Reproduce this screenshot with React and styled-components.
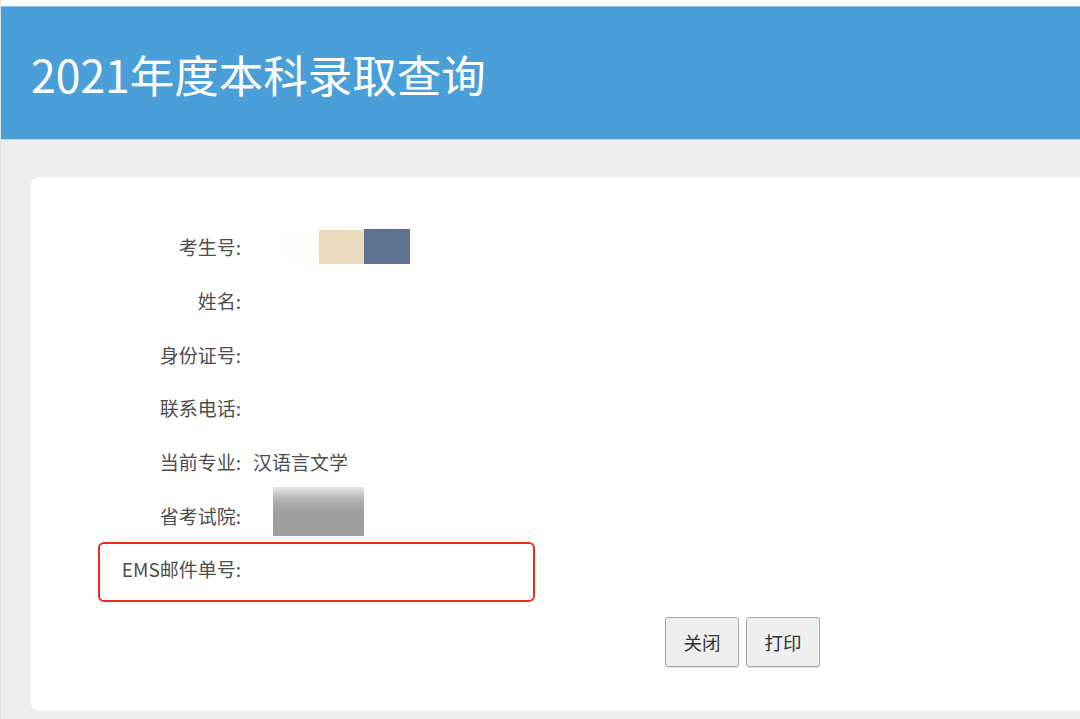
import React from "react";
import styled, { createGlobalStyle } from "styled-components";

const Global = createGlobalStyle`
  html, body { margin: 0; padding: 0; }
  body {
    background: #eeeeee;
    font-family: "Noto Sans CJK SC", "Noto Sans", "Liberation Sans", sans-serif;
  }
`;

const Page = styled.div`
  width: 1080px;
  height: 719px;
  overflow: hidden;
  display: flex;
  flex-direction: column;
  background: #eeeeee;
  border-left: 1px solid #e2e2e2;
  box-sizing: border-box;
`;

const TopStrip = styled.div`
  height: 6px;
  background: #ffffff;
  flex: none;
`;

const Header = styled.header`
  height: 134px;
  flex: none;
  background: #4a9fd9;
  border-top: 1px solid #8cc0e8;
  border-bottom: 1px solid #bcd8ef;
  box-sizing: border-box;
  display: flex;
  align-items: center;
  padding-left: 30px;
`;

const Title = styled.h1`
  margin: 0;
  margin-top: 3px;
  font-size: 44.5px;
  font-weight: 400;
  color: #ffffff;
  line-height: 1;
`;

const Main = styled.main`
  flex: 1;
  padding: 37px 0 8px 30px;
  display: flex;
`;

const Card = styled.section`
  flex: 1;
  position: relative;
  background: #ffffff;
  border-radius: 8px 0 0 8px;
  padding-top: 43px;
  box-sizing: border-box;
`;

const Rows = styled.div`
  display: flex;
  flex-direction: column;
`;

const Row = styled.div`
  height: 53.7px;
  display: flex;
  align-items: center;
`;

const Label = styled.div`
  width: 210px;
  flex: none;
  text-align: right;
  font-size: 19px;
  color: #4d4d4d;
  line-height: 1;
  white-space: nowrap;
`;

const Value = styled.div`
  margin-left: 12px;
  font-size: 19px;
  color: #4d4d4d;
  line-height: 1;
  display: flex;
  align-items: center;
`;

const Smudge = styled.div`
  width: ${(p) => p.$w}px;
  height: ${(p) => p.$h}px;
  margin-left: ${(p) => p.$ml || 0}px;
  margin-top: ${(p) => p.$mt || 0}px;
  background: ${(p) => p.$bg};
  filter: blur(0.6px);
`;

const Highlight = styled.div`
  position: absolute;
  left: 67px;
  top: 365px;
  width: 437px;
  height: 60px;
  border: 2px solid #ee2a1c;
  border-radius: 6px;
  box-sizing: border-box;
  pointer-events: none;
`;

const ButtonBar = styled.div`
  display: flex;
  gap: 7px;
  padding-left: 634px;
  margin-top: 21px;
`;

const Button = styled.button`
  width: 74px;
  height: 50px;
  background: #efefef;
  border: 1px solid #a9a9a9;
  border-radius: 3px;
  box-shadow: 0 1px 1px rgba(0, 0, 0, 0.12);
  font-family: inherit;
  font-size: 18.5px;
  color: #333333;
  padding: 0;
  cursor: pointer;
`;

const rows = [
  { label: "考生号:", kind: "id" },
  { label: "姓名:" },
  { label: "身份证号:" },
  { label: "联系电话:" },
  { label: "当前专业:", value: "汉语言文学" },
  { label: "省考试院:", kind: "gray" },
  { label: "EMS邮件单号:" },
];

function RowValue({ row }) {
  if (row.kind === "id") {
    return (
      <Value>
        <Smudge $w={48} $h={30} $ml={18} $bg="linear-gradient(90deg, #ffffff, #fdfbf6)" />
        <Smudge $w={45} $h={34} $bg="#ecdcbd" />
        <Smudge $w={46} $h={35} $bg="#5f7191" />
      </Value>
    );
  }
  if (row.kind === "gray") {
    return (
      <Value>
        <Smudge
          $w={91}
          $h={49}
          $ml={20}
          $mt={-8}
          $bg="linear-gradient(180deg, #e6e6e6 0%, #b4b4b4 25%, #a0a0a0 45%, #9d9d9d 100%)"
        />
      </Value>
    );
  }
  return <Value>{row.value || ""}</Value>;
}

export default function App() {
  return (
    <>
      <Global />
      <Page>
        <TopStrip />
        <Header>
          <Title>2021年度本科录取查询</Title>
        </Header>
        <Main>
          <Card>
            <Rows>
              {rows.map((r) => (
                <Row key={r.label}>
                  <Label>{r.label}</Label>
                  <RowValue row={r} />
                </Row>
              ))}
            </Rows>
            <ButtonBar>
              <Button>关闭</Button>
              <Button>打印</Button>
            </ButtonBar>
            <Highlight />
          </Card>
        </Main>
      </Page>
    </>
  );
}
